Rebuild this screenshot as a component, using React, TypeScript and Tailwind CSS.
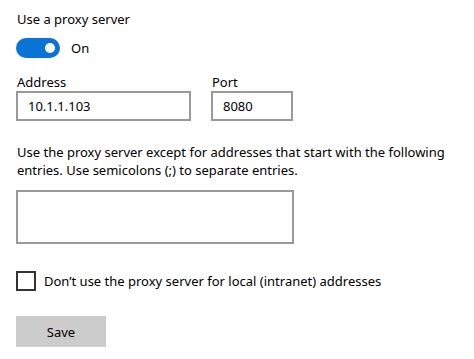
export default function App() {
  return (
    <div
      className="w-[474px] h-[359px] bg-white text-[#000] pl-[16px] pt-[9px] text-[13px] leading-[20px]"
      style={{ fontFamily: '"Noto Sans", "Open Sans", sans-serif' }}
    >
      <div className="pl-[1px]">Use a proxy server</div>
      <div className="flex items-center mt-[9px] h-[20px]">
        <div className="w-[44px] h-[20px] rounded-full bg-[#0a74d6] flex items-center justify-end pr-[5px]">
          <div className="w-[10px] h-[10px] rounded-full bg-white" />
        </div>
        <span className="ml-[11px]">On</span>
      </div>
      <div className="flex mt-[15px] gap-[20px]">
        <div className="flex flex-col">
          <span className="pl-[1px] h-[18px] leading-[18px]">Address</span>
          <div className="w-[175px] h-[30px] border-2 border-[#999] flex items-center pl-[10px]">10.1.1.103</div>
        </div>
        <div className="flex flex-col">
          <span className="pl-[1px] h-[18px] leading-[18px]">Port</span>
          <div className="w-[82px] h-[30px] border-2 border-[#999] flex items-center pl-[10px]">8080</div>
        </div>
      </div>
      <div className="mt-[22px] pl-[1px] leading-[18px] w-[450px]">
        Use the proxy server except for addresses that start with the following entries. Use semicolons (;) to separate entries.
      </div>
      <div className="mt-[11px] w-[278px] h-[54px] border-2 border-[#999]" />
      <div className="flex items-center mt-[27px]">
        <div className="w-[20px] h-[20px] border-2 border-[#333]" />
        <span className="ml-[8px]">Don’t use the proxy server for local (intranet) addresses</span>
      </div>
      <div className="mt-[25px] w-[90px] h-[31px] bg-[#cccccc] flex items-center justify-center">Save</div>
    </div>
  );
}
